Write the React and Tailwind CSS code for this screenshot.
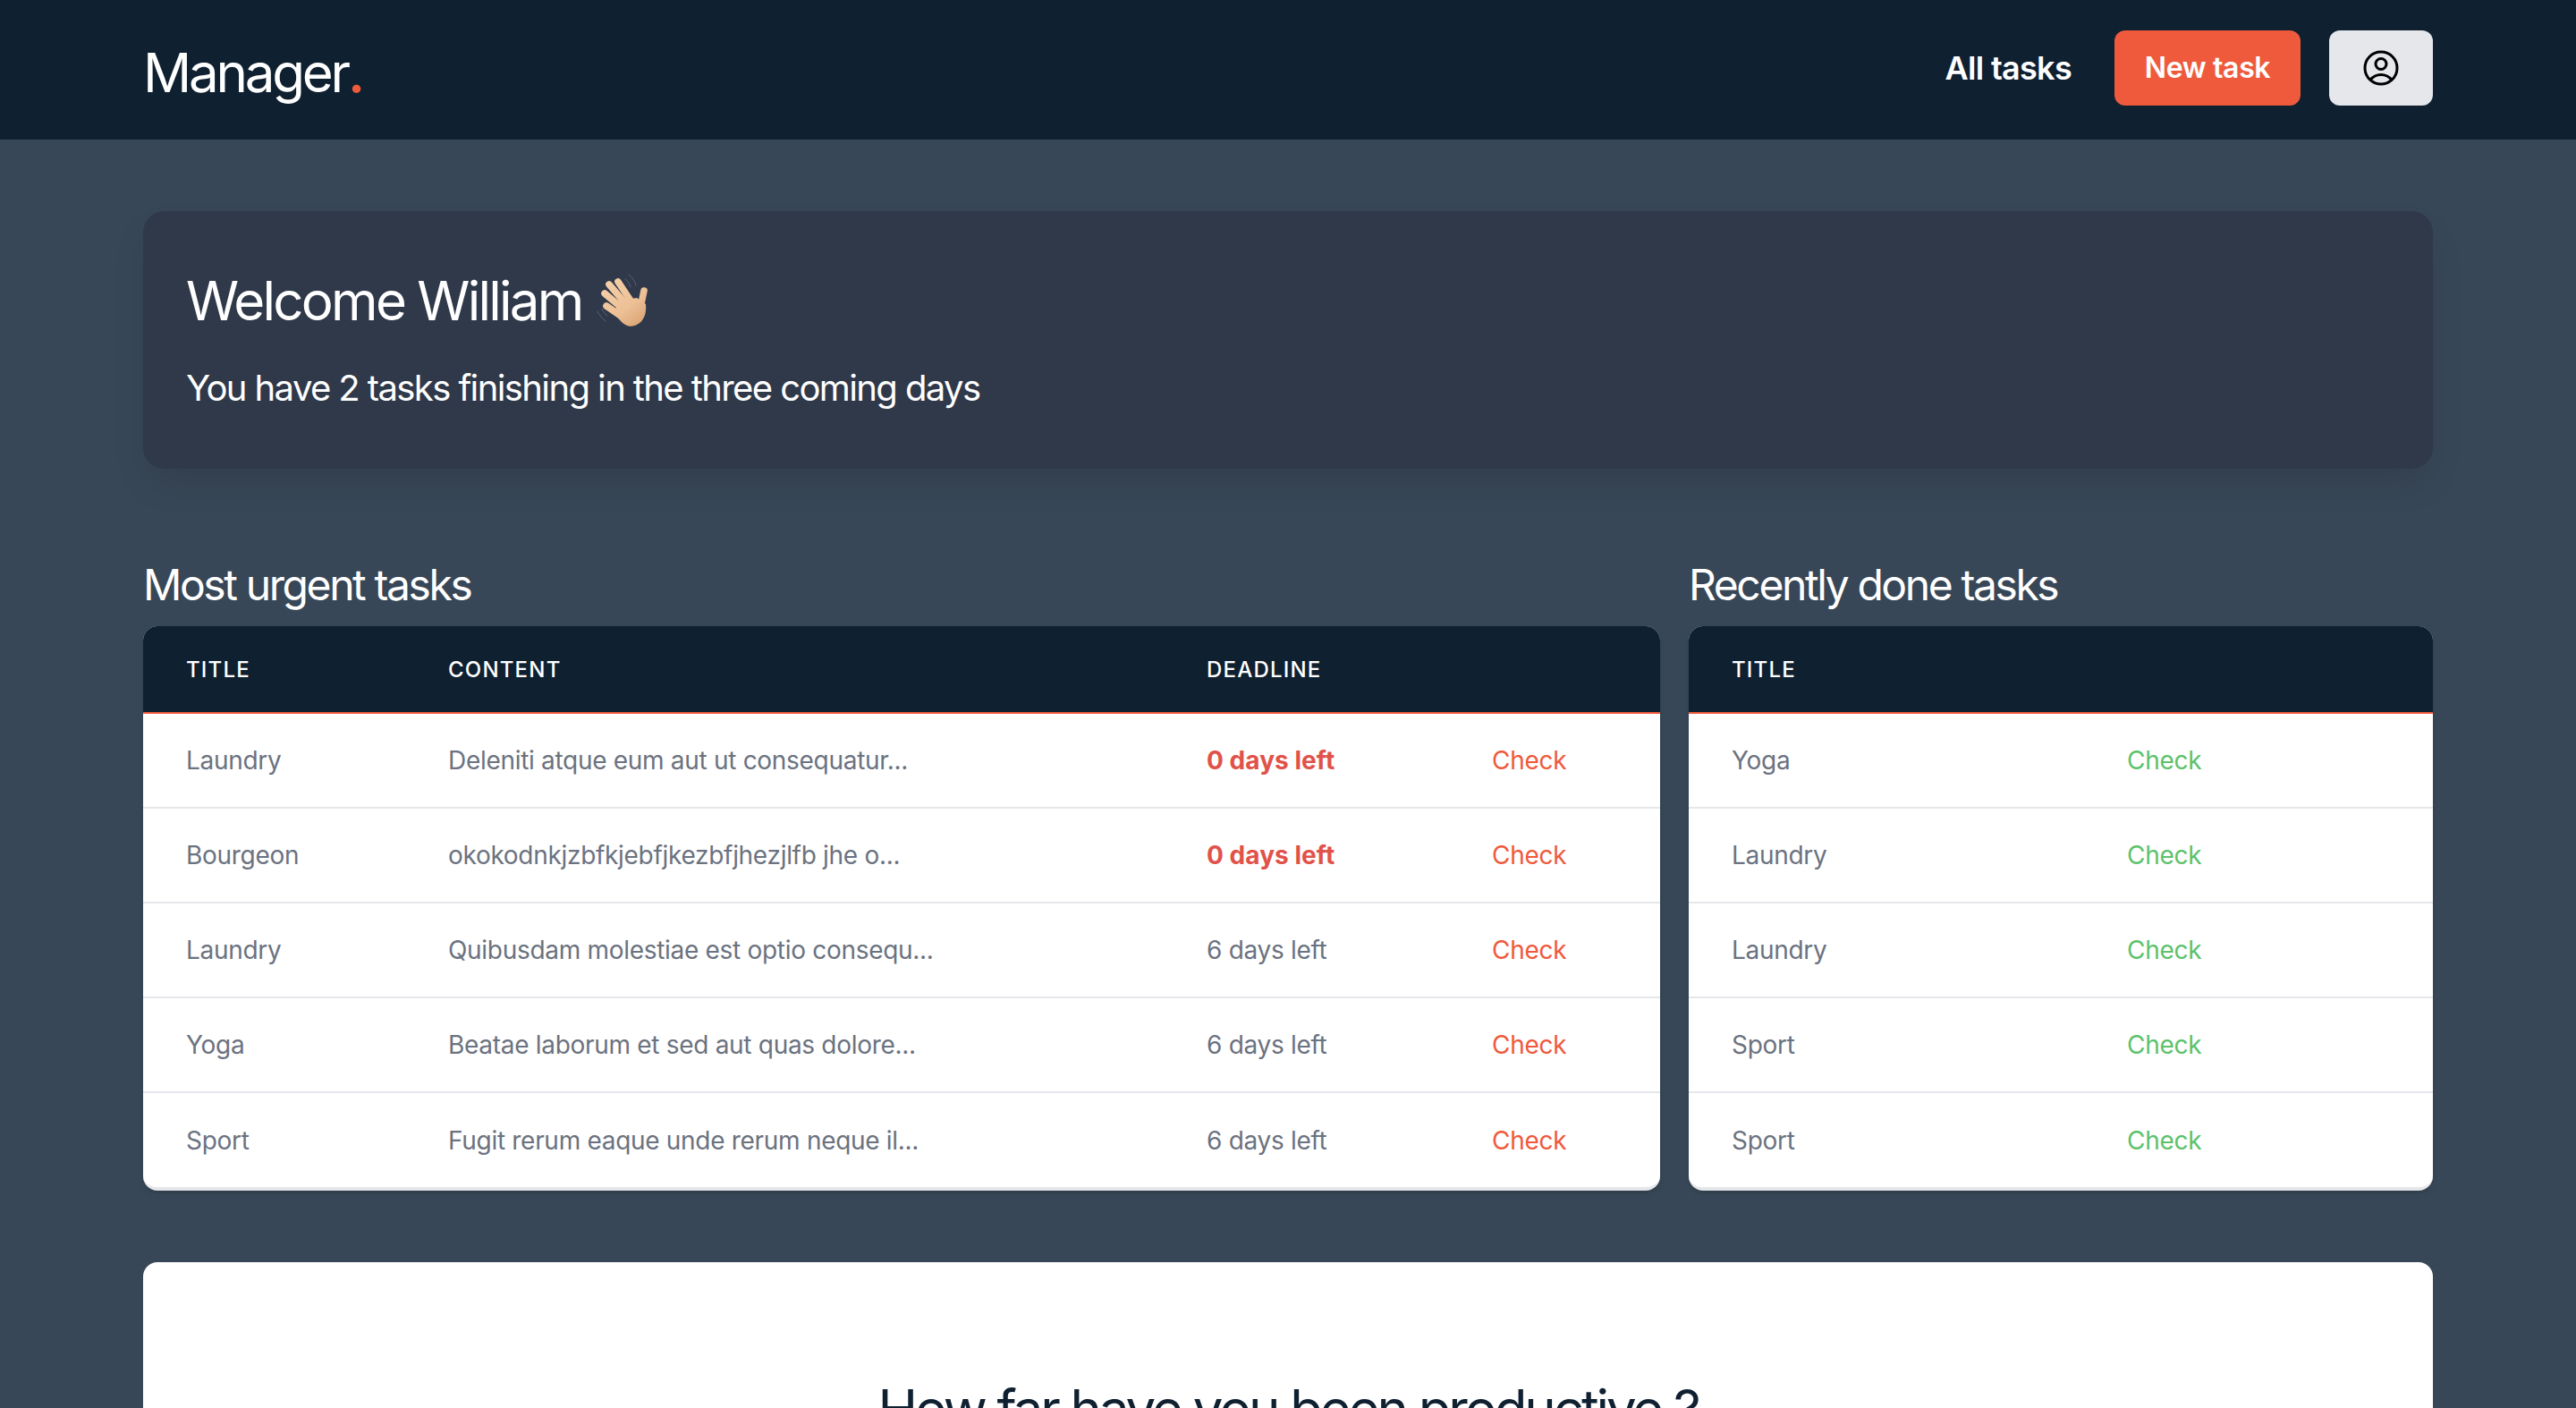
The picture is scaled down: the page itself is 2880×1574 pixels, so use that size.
import { HiOutlineUserCircle } from "react-icons/hi2";

const urgentTasks = [
  { title: "Laundry", content: "Deleniti atque eum aut ut consequatur...", days: 0 },
  { title: "Bourgeon", content: "okokodnkjzbfkjebfjkezbfjhezjlfb jhe o...", days: 0 },
  { title: "Laundry", content: "Quibusdam molestiae est optio consequ...", days: 6 },
  { title: "Yoga", content: "Beatae laborum et sed aut quas dolore...", days: 6 },
  { title: "Sport", content: "Fugit rerum eaque unde rerum neque il...", days: 6 },
];

const doneTasks = ["Yoga", "Laundry", "Laundry", "Sport", "Sport"];

// main de salutation, dessinée car pas de police emoji
function WavingHand() {
  return (
    <svg viewBox="0 0 60 60" className="h-[60px] w-[60px] ml-4 shrink-0">
      <defs>
        <linearGradient id="skin" gradientUnits="userSpaceOnUse" x1="10" y1="8" x2="50" y2="58">
          <stop offset="0" stopColor="#f4d0a8" />
          <stop offset="0.6" stopColor="#edc096" />
          <stop offset="1" stopColor="#d9a373" />
        </linearGradient>
      </defs>
      <g stroke="#6b7280" strokeWidth="0.9" fill="none" strokeLinecap="round" opacity="0.8">
        <path d="M32 6c3 2 5 5 6 9" />
        <path d="M36 1c4 3 7 7 8 12" />
        <path d="M1 42c2 4 5 8 9 11" />
        <path d="M6 39c1 3 3 6 6 8" />
      </g>
      <path d="M26 30 45 27 55 34C56 44 53 53 45 57 39 60 33 59 28 54L19 44Z" fill="url(#skin)" />
      <g stroke="url(#skin)" strokeWidth="7.6" strokeLinecap="round" fill="none">
        <path d="M24 9 38 30" />
        <path d="M14 12 32 33" />
        <path d="M9 22 28 38" />
        <path d="M11 36 27 47" />
        <path d="M53 19 49 38" />
      </g>
    </svg>
  );
}

function TableHead({ children }) {
  return (
    <th className="h-[97px] px-12 pt-[2px] text-left text-[24px] font-medium tracking-[1.2px] uppercase text-white">
      {children}
    </th>
  );
}

function TableCard({ children }) {
  return (
    <div className="rounded-[16px] overflow-hidden bg-white border-b-4 border-[#e5e7eb] shadow-md">
      <table className="w-full table-fixed border-collapse">{children}</table>
    </div>
  );
}

export default function App() {
  return (
    <div className="h-screen overflow-hidden bg-[#384757] font-['Inter',sans-serif]">
      <header className="h-[156px] bg-[#0f2031] px-[160px] flex items-center justify-between">
        <div className="text-[60px] leading-none text-white tracking-[-3.2px] mt-[6px]">
          Manager<span className="font-semibold text-[#ef5a3c]">.</span>
        </div>
        <nav className="flex items-center mb-1">
          <a className="text-[36px] font-semibold text-white tracking-[-0.7px]">All tasks</a>
          <button className="ml-12 h-[84px] w-[208px] rounded-[12px] bg-[#ef5a3c] text-[32px] font-semibold text-white tracking-[-0.35px]">
            New task
          </button>
          <button className="ml-8 h-[84px] w-[116px] rounded-[12px] bg-[#e5e7eb] flex items-center justify-center">
            <HiOutlineUserCircle className="w-[48px] h-[48px] text-black" />
          </button>
        </nav>
      </header>

      <main className="px-[160px] pt-20">
        <section className="h-[288px] rounded-[24px] bg-[#30394a] px-12 pt-[64px] shadow-[0_20px_40px_-6px_rgba(0,0,0,0.12)]">
          <h1 className="flex items-center text-[60px] leading-[72px] text-white tracking-[-2.75px]">
            Welcome William
            <WavingHand />
          </h1>
          <p className="mt-[34px] text-[40px] leading-[56px] text-white tracking-[-1.6px]">
            You have 2 tasks finishing in the three coming days
          </p>
        </section>

        <div className="mt-[98px] grid grid-cols-3 gap-8">
          <div className="col-span-2">
            <h2 className="text-[48px] leading-[64px] text-white tracking-[-2.4px] mb-[14px]">Most urgent tasks</h2>
            <TableCard>
              <colgroup>
                <col className="w-[293px]" />
                <col className="w-[848px]" />
                <col className="w-[319px]" />
                <col />
              </colgroup>
              <thead className="bg-[#0f2031] border-b-2 border-[#ef5a3c]">
                <tr>
                  <TableHead>Title</TableHead>
                  <TableHead>Content</TableHead>
                  <TableHead>Deadline</TableHead>
                  <TableHead />
                </tr>
              </thead>
              <tbody>
                {urgentTasks.map((task, index) => (
                  <tr key={index} className="h-[106px] border-b-2 border-[#e5e7eb] last:border-b-0 text-[28px] tracking-[-0.3px] text-[#6b7280]">
                    <td className="px-12">{task.title}</td>
                    <td className="px-12 whitespace-nowrap">{task.content}</td>
                    <td className={task.days === 0 ? "px-12 font-bold tracking-[0.05px] text-[#e0524a]" : "px-12"}>{task.days} days left</td>
                    <td className="px-12 text-[#ef5a3c]">Check</td>
                  </tr>
                ))}
              </tbody>
            </TableCard>
          </div>
          <div>
            <h2 className="text-[48px] leading-[64px] text-white tracking-[-2.4px] mb-[14px]">Recently done tasks</h2>
            <TableCard>
              <colgroup>
                <col className="w-[442px]" />
                <col />
              </colgroup>
              <thead className="bg-[#0f2031] border-b-2 border-[#ef5a3c]">
                <tr>
                  <TableHead>Title</TableHead>
                  <TableHead />
                </tr>
              </thead>
              <tbody>
                {doneTasks.map((title, index) => (
                  <tr key={index} className="h-[106px] border-b-2 border-[#e5e7eb] last:border-b-0 text-[28px] tracking-[-0.3px] text-[#6b7280]">
                    <td className="px-12">{title}</td>
                    <td className="px-12 text-[#5cc26c]">Check</td>
                  </tr>
                ))}
              </tbody>
            </TableCard>
          </div>
        </div>

        <section className="mt-20 h-[400px] rounded-[16px] bg-white pt-[128px] text-center">
          <h2 className="text-[60px] leading-[72px] tracking-[-3.1px] text-[#0f2031]">How far have you been productive ?</h2>
        </section>
      </main>
    </div>
  );
}
